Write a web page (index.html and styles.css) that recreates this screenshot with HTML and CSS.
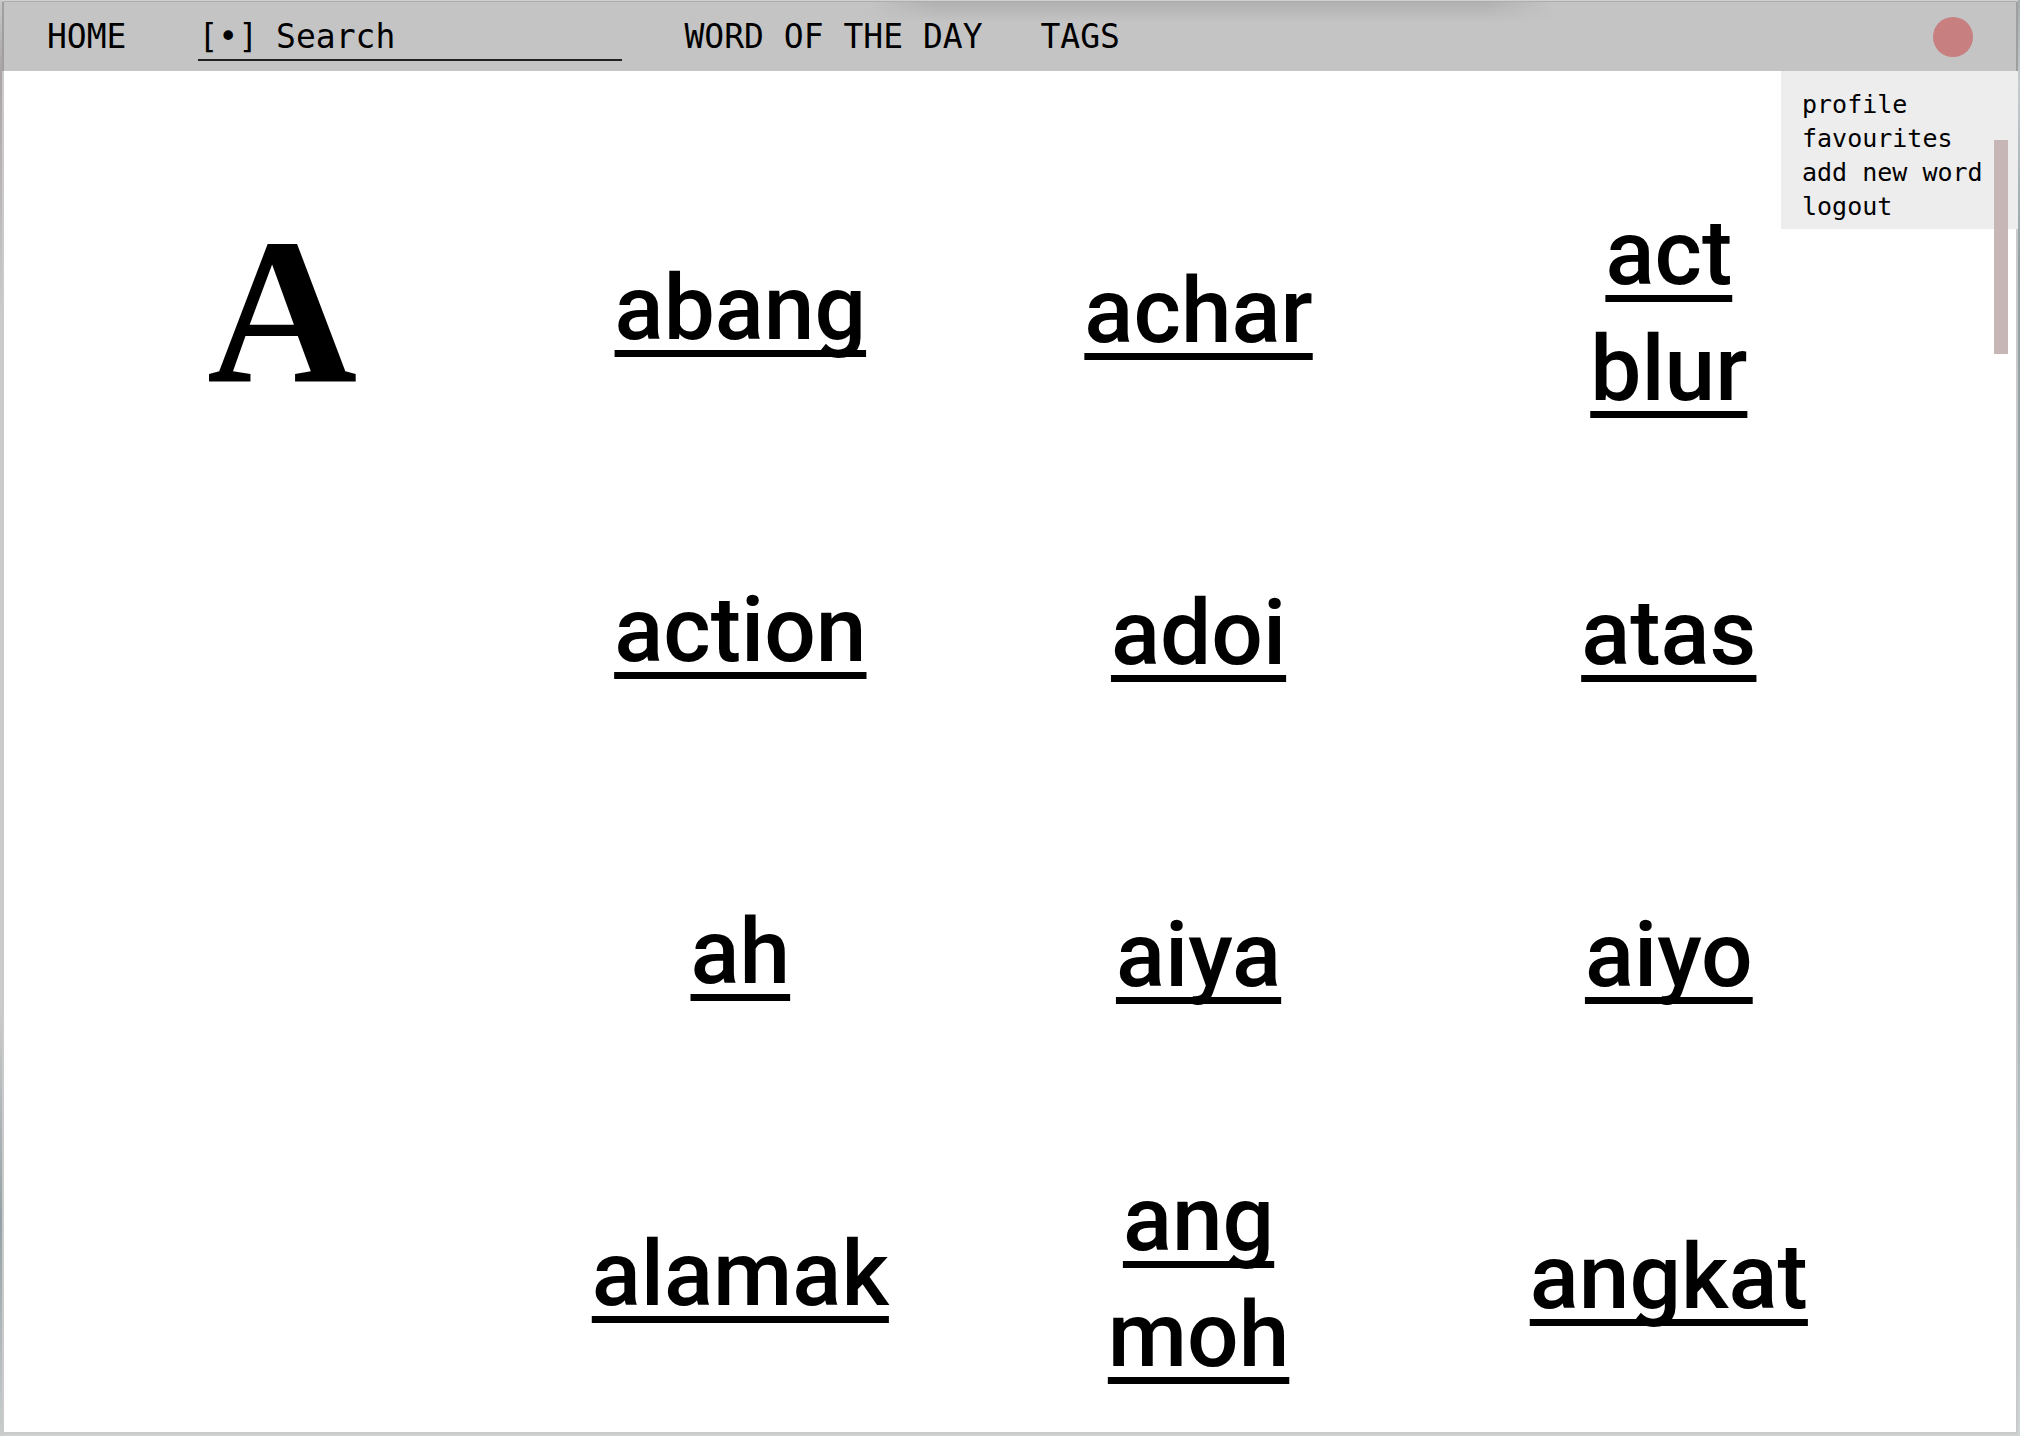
FILE: index.html
```html
<!DOCTYPE html>
<html lang="en">
<head>
<meta charset="utf-8">
<meta name="viewport" content="width=device-width, initial-scale=1">
<title>Dictionary – A</title>
<link rel="stylesheet" href="styles.css">
</head>
<body>
<div class="frame">
  <header class="topbar">
    <nav class="nav" aria-label="Main">
      <a class="nav-link home" href="#">HOME</a>
      <form class="search" role="search">
        <label class="search-label" for="q">[•]</label>
        <input class="search-input" id="q" type="search" placeholder="Search">
      </form>
      <a class="nav-link" href="#">WORD OF THE DAY</a>
      <a class="nav-link" href="#">TAGS</a>
    </nav>
    <button class="avatar" type="button" aria-label="Account menu"></button>
    <ul class="menu">
      <li><a href="#">profile</a></li>
      <li><a href="#">favourites</a></li>
      <li><a href="#">add new word</a></li>
      <li><a href="#">logout</a></li>
    </ul>
  </header>
  <main class="index">
    <h1 class="letter">A</h1>
    <ul class="words words-first">
      <li><a href="#">abang</a></li>
      <li><a href="#">action</a></li>
      <li><a href="#">ah</a></li>
      <li><a href="#">alamak</a></li>
    </ul>
    <ul class="words">
      <li><a href="#">achar</a></li>
      <li><a href="#">adoi</a></li>
      <li><a href="#">aiya</a></li>
      <li><a href="#">ang<br>moh</a></li>
    </ul>
    <ul class="words">
      <li><a href="#">act<br>blur</a></li>
      <li><a href="#">atas</a></li>
      <li><a href="#">aiyo</a></li>
      <li><a href="#">angkat</a></li>
    </ul>
  </main>
  <div class="scroll-thumb"></div>
</div>
</body>
</html>
```
FILE: styles.css
```css
* { box-sizing: border-box; }

body {
  margin: 0;
  min-height: 100vh;
  display: flex;
  padding: 1px 2px 2px;
  background:
    linear-gradient(#c8c8c8, #a9a3a5 5%, #cccacb 22%, #cccccc 70%, #93a0a5 85%, #c8cccd) left / 2px 100% no-repeat,
    linear-gradient(#a4acae, #c4ccd0 6%, #93a1a6 18%, #9cabb0 60%, #cfd6d8) right / 2px 100% no-repeat,
    #cdd1d2;
}

ul { list-style: none; margin: 0; padding: 0; }
a { color: inherit; text-decoration: none; }

.frame {
  position: relative;
  flex: 1;
  background: #fff;
  border: 2px solid #cacaca;
  border-top: 1px solid #adadad;
}

.topbar {
  position: relative;
  display: flex;
  align-items: center;
  justify-content: space-between;
  height: 69px;
  margin: 0 -2px;
  padding: 0 43px;
  border: solid #9f9f9f;
  border-width: 0 2px;
  background: #c4c4c4;
  font: 33px/40px "DejaVu Sans Mono", monospace;
}

/* soft shade along the top edge */
.topbar::before {
  content: "";
  position: absolute;
  top: 0;
  left: 43%;
  width: 34%;
  height: 20px;
  background: linear-gradient(#b0b0b0, #c4c4c400);
  mask-image: linear-gradient(90deg, transparent, #000 10%, #000 90%, transparent);
}

.nav { display: flex; align-items: center; }
.nav-link { margin-right: 58px; }
.home { margin-right: 72px; }

.search {
  display: flex;
  gap: 18px;
  width: 424px;
  height: 48px;
  margin: 0 62px 0 0;
  padding-top: 4px;
  border-bottom: 2px solid #222;
}

.search-input {
  flex: 1;
  min-width: 0;
  height: 40px;
  padding: 0;
  border: 0;
  outline: 0;
  background: none;
  color: #000;
  font: inherit;
  appearance: none;
}
.search-input::placeholder { color: #000; opacity: 1; }

.avatar {
  width: 40px;
  height: 40px;
  padding: 0;
  border: 0;
  border-radius: 50%;
  background: #c77f7f;
}

.menu {
  position: absolute;
  top: 100%;
  right: -2px;
  width: 237px;
  padding: 17px 0 5px 21px;
  background: #ededed;
  font-size: 25px;
  line-height: 34px;
  white-space: nowrap;
}

.index {
  display: grid;
  grid-template-columns: 19fr 19fr 19fr 20fr;
  padding: 124px 106px 34px 49px;
}

.letter {
  margin: 0;
  text-align: center;
  font: bold 208px/232px "Liberation Serif", serif;
}

.words {
  display: grid;
  grid-auto-rows: 232px;
  gap: 90px;
  font: 500 91px/116px Roboto, sans-serif;
  text-align: center;
}
.words-first { margin-top: -3px; }
.words li { display: grid; place-content: center; }
.words a {
  text-decoration: underline 7px;
  text-underline-offset: 11px;
  text-decoration-skip-ink: none;
}

.scroll-thumb {
  position: absolute;
  top: 138px;
  right: 8px;
  width: 14px;
  height: 214px;
  background: #c7b6b6;
}
```
